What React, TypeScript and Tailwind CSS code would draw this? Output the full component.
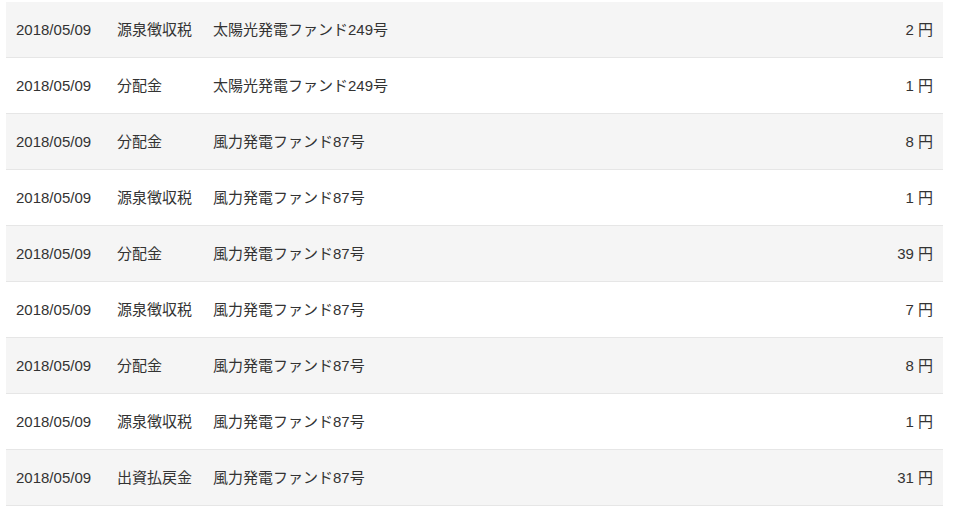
const rows = [
  { date: "2018/05/09", type: "源泉徴収税", fund: "太陽光発電ファンド249号", amount: "2" },
  { date: "2018/05/09", type: "分配金", fund: "太陽光発電ファンド249号", amount: "1" },
  { date: "2018/05/09", type: "分配金", fund: "風力発電ファンド87号", amount: "8" },
  { date: "2018/05/09", type: "源泉徴収税", fund: "風力発電ファンド87号", amount: "1" },
  { date: "2018/05/09", type: "分配金", fund: "風力発電ファンド87号", amount: "39" },
  { date: "2018/05/09", type: "源泉徴収税", fund: "風力発電ファンド87号", amount: "7" },
  { date: "2018/05/09", type: "分配金", fund: "風力発電ファンド87号", amount: "8" },
  { date: "2018/05/09", type: "源泉徴収税", fund: "風力発電ファンド87号", amount: "1" },
  { date: "2018/05/09", type: "出資払戻金", fund: "風力発電ファンド87号", amount: "31" },
];

const App = () => {
  return (
    <div
      className="min-h-[520px] w-[954px] bg-white pt-[2px] pl-[6px] text-[#333] text-[15px]"
      style={{ fontFamily: '"Liberation Sans", "Noto Sans CJK JP", sans-serif' }}
    >
      <div className="w-[937px]">
        {rows.map((r, i) => (
          <div
            key={i}
            className={`flex h-[56px] items-center border-b border-[#e6e6e6] px-[10px] pt-[2px] ${
              i % 2 === 0 ? "bg-[#f5f5f5]" : "bg-white"
            }`}
          >
            <div className="w-[101px]">{r.date}</div>
            <div className="w-[96px]">{r.type}</div>
            <div className="flex-1">{r.fund}</div>
            <div className="text-right">
              {r.amount} 円
            </div>
          </div>
        ))}
      </div>
    </div>
  );
};

export default App;
